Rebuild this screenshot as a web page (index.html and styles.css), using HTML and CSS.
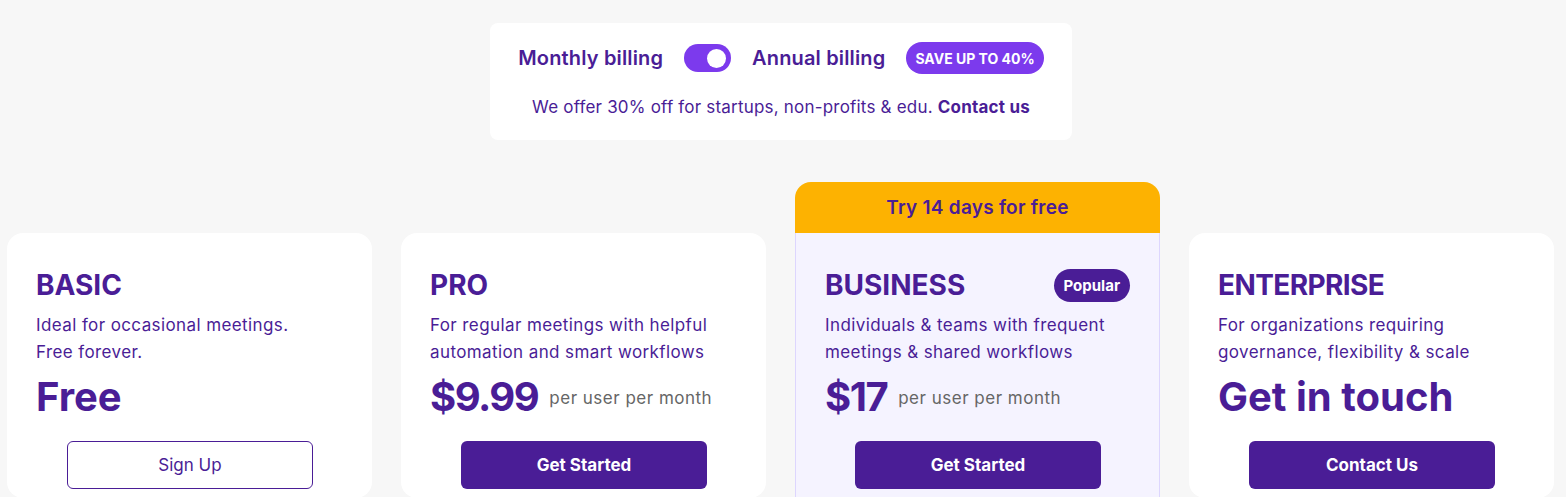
FILE: index.html
```html
<!DOCTYPE html>
<html lang="en">
<head>
<meta charset="utf-8">
<title>Pricing</title>
<link rel="stylesheet" href="styles.css">
</head>
<body>
<div class="page">
  <div class="billing">
    <div class="billing-row">
      <span class="billing-label">Monthly billing</span>
      <span class="toggle"><span class="knob"></span></span>
      <span class="billing-label">Annual billing</span>
      <span class="save">SAVE UP TO 40%</span>
    </div>
    <p class="offer">We offer 30% off for startups, non-profits &amp; edu. <b>Contact us</b></p>
  </div>

  <div class="plans">
    <div class="plan-col">
      <div class="card">
        <h2 class="plan-name">BASIC</h2>
        <p class="desc">Ideal for occasional meetings.<br>Free forever.</p>
        <div class="price"><span class="amount">Free</span></div>
        <a class="btn btn-outline">Sign Up</a>
      </div>
    </div>
    <div class="plan-col">
      <div class="card">
        <h2 class="plan-name">PRO</h2>
        <p class="desc">For regular meetings with helpful<br>automation and smart workflows</p>
        <div class="price"><span class="amount num">$9.99</span><span class="per">per user per month</span></div>
        <a class="btn">Get Started</a>
      </div>
    </div>
    <div class="plan-col featured">
      <div class="trial">Try 14 days for free</div>
      <div class="card card-featured">
        <div class="name-row">
          <h2 class="plan-name">BUSINESS</h2>
          <span class="popular">Popular</span>
        </div>
        <p class="desc">Individuals &amp; teams with frequent<br>meetings &amp; shared workflows</p>
        <div class="price"><span class="amount num">$17</span><span class="per">per user per month</span></div>
        <a class="btn">Get Started</a>
      </div>
    </div>
    <div class="plan-col">
      <div class="card">
        <h2 class="plan-name tight">ENTERPRISE</h2>
        <p class="desc">For organizations requiring<br>governance, flexibility &amp; scale</p>
        <div class="price"><span class="amount">Get in touch</span></div>
        <a class="btn">Contact Us</a>
      </div>
    </div>
  </div>
</div>
</body>
</html>
```

FILE: styles.css
```css
* { box-sizing: border-box; }
html, body { margin: 0; padding: 0; }
body {
  background: #f7f7f7;
  font-family: Inter, "Open Sans", sans-serif;
  color: #4a1d96;
  width: 1566px;
  height: 497px;
  overflow: hidden;
}
.page {
  display: flex;
  flex-direction: column;
  align-items: center;
  padding-top: 23px;
}
.billing {
  width: 582px;
  height: 117px;
  margin-right: 4px;
  background: #fff;
  border-radius: 8px;
  display: flex;
  flex-direction: column;
  align-items: center;
  padding-top: 19px;
}
.billing-row {
  display: flex;
  align-items: center;
  height: 32px;
}
.billing-label {
  font-size: 20px;
  font-weight: 600;
  letter-spacing: 0.15px;
  color: #4a1d96;
}
.toggle {
  width: 47px;
  height: 28px;
  border-radius: 14px;
  background: #7c3aed;
  margin: 0 21px;
  display: flex;
  align-items: center;
  justify-content: flex-end;
  padding-right: 5px;
}
.knob {
  width: 19px;
  height: 19px;
  border-radius: 50%;
  background: #fff;
}
.save {
  margin-left: 21px;
  background: #7c3aed;
  color: #fff;
  font-size: 14px;
  font-weight: 700;
  height: 32px;
  padding: 0 9px;
  border-radius: 16px;
  display: flex;
  align-items: center;
}
.offer {
  margin: 23px 0 0;
  font-size: 17px;
  letter-spacing: 0.2px;
  color: #4a1d96;
}
.offer b { font-weight: 700; }

.plans {
  align-self: stretch;
  display: grid;
  grid-template-columns: repeat(4, 365px);
  column-gap: 29px;
  padding-left: 7px;
  margin-top: 42px;
  align-items: end;
}
.plan-col {
  display: flex;
  flex-direction: column;
}
.trial {
  height: 51px;
  background: #fdb201;
  border-radius: 16px 16px 0 0;
  display: flex;
  align-items: center;
  justify-content: center;
  font-size: 19px;
  font-weight: 600;
  letter-spacing: 0.25px;
  color: #4a1d96;
}
.card {
  background: #fff;
  border-radius: 16px;
  padding: 34px 28px 0 29px;
  height: 265px;
  display: flex;
  flex-direction: column;
}
.card-featured {
  background: #f5f3ff;
  border: 1px solid #ddd6fe;
  border-top: none;
  border-radius: 0;
  padding: 34px 28px 0 29px;
}
.name-row {
  display: flex;
  justify-content: space-between;
  align-items: center;
}
.plan-name {
  margin: 0;
  font-size: 28px;
  line-height: 36px;
  font-weight: 700;
  color: #4a1d96;
}
.plan-name.tight { letter-spacing: -0.6px; }
.popular {
  background: #4a1d96;
  color: #fff;
  font-size: 15px;
  font-weight: 700;
  height: 33px;
  padding: 0 10px;
  border-radius: 17px;
  display: flex;
  align-items: center;
  margin-right: 1px;
}
.desc {
  margin: 9px 0 0;
  font-size: 17px;
  letter-spacing: 0.4px;
  line-height: 27px;
  color: #4a1d96;
}
.price {
  display: flex;
  align-items: center;
  margin-top: 7px;
  height: 48px;
}
.amount {
  font-size: 40px;
  font-weight: 700;
  line-height: 48px;
  color: #4a1d96;
}
.amount.num { letter-spacing: -1.5px; }
.per {
  margin-left: 11px;
  margin-top: 2px;
  font-size: 17px;
  letter-spacing: 0.5px;
  color: #666;
}
.btn {
  align-self: center;
  margin-top: 20px;
  width: 246px;
  height: 48px;
  border-radius: 6px;
  background: #4a1d96;
  color: #fff;
  font-size: 17px;
  font-weight: 700;
  display: flex;
  align-items: center;
  justify-content: center;
}
.btn-outline {
  background: #fff;
  color: #4a1d96;
  border: 1px solid #4a1d96;
  font-weight: 400;
}
```
